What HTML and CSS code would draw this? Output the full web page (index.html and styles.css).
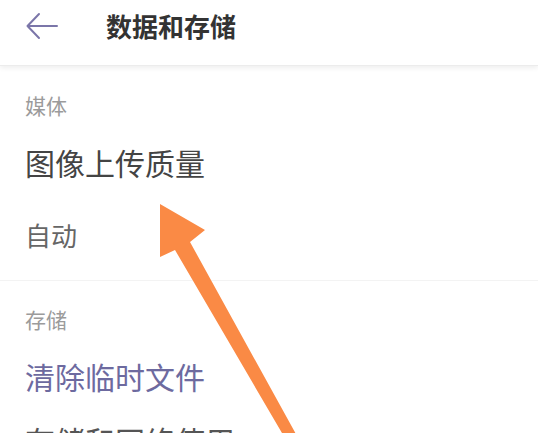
FILE: index.html
```html
<!DOCTYPE html>
<html lang="zh-CN">
<head>
<meta charset="utf-8">
<title>数据和存储</title>
<link rel="stylesheet" href="styles.css">
</head>
<body>
<div class="page">
  <header class="header">
    <svg class="back" width="32" height="28" viewBox="0 0 32 28">
      <path d="M13 2 L1.5 14 L13 26 M1.5 14 H31" fill="none" stroke="#7b76a9" stroke-width="2" stroke-linecap="round" stroke-linejoin="round"/>
    </svg>
    <h1 class="title">数据和存储</h1>
  </header>
  <section class="section first">
    <div class="label">媒体</div>
    <div class="item">图像上传质量</div>
    <div class="sub">自动</div>
  </section>
  <section class="section second">
    <div class="label">存储</div>
    <div class="item link">清除临时文件</div>
    <div class="item next">存储和网络使用</div>
  </section>
  <svg class="overlay" width="538" height="433" viewBox="0 0 538 433">
    <polygon points="160,204 205,230 190,242 302,445 289,445 175,250 160,257" fill="#fa8a45"/>
  </svg>
</div>
</body>
</html>
```
FILE: styles.css
```css
html, body {
  margin: 0;
  padding: 0;
  background: #ffffff;
}
.page {
  position: relative;
  width: 538px;
  height: 433px;
  overflow: hidden;
  font-family: "Noto Sans CJK SC", "Noto Sans", sans-serif;
}
.header {
  height: 66px;
  box-sizing: border-box;
  padding: 0 0 14px 26px;
  display: flex;
  align-items: center;
  border-bottom: 1px solid #ececec;
  box-shadow: 0 2px 5px rgba(0, 0, 0, 0.07);
}
.back {
  display: block;
}
.title {
  margin: 0 0 0 48px;
  font-size: 26px;
  line-height: 30px;
  font-weight: 700;
  color: #333333;
}
.section {
  padding-left: 25px;
  display: flex;
  flex-direction: column;
  align-items: flex-start;
}
.first {
  padding-top: 26px;
  padding-bottom: 30px;
  border-bottom: 1px solid #f3f3f3;
}
.second {
  padding-top: 25px;
}
.label {
  font-size: 21px;
  line-height: 26px;
  color: #9b9b9b;
}
.item {
  margin-top: 29px;
  font-size: 30px;
  line-height: 30px;
  color: #444444;
}
.sub {
  margin-top: 43px;
  font-size: 26px;
  line-height: 30px;
  color: #666666;
}
.link {
  color: #6d6a9f;
}
.next {
  margin-top: 34px;
  color: #555555;
}
.overlay {
  position: absolute;
  left: 0;
  top: 0;
  pointer-events: none;
}
```
